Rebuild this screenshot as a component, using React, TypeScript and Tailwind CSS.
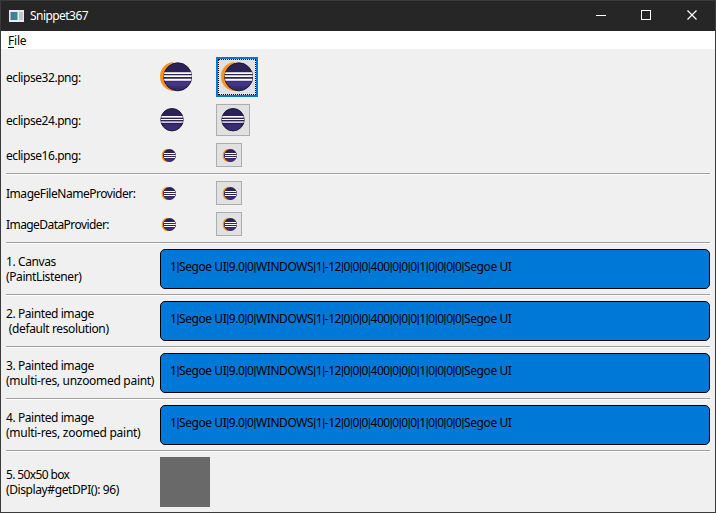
import React from "react";

function Sphere({ size }: { size: 16 | 24 | 32 }) {
  if (size === 32) {
    return (
      <svg width="32" height="32" viewBox="0 0 32 32" className="block shrink-0">
        <defs>
          <linearGradient id="s32" x1="0" y1="0" x2="0" y2="1">
            <stop offset="0" stopColor="#2c2255" />
            <stop offset="0.5" stopColor="#2c2255" />
            <stop offset="0.75" stopColor="#473788" />
            <stop offset="1" stopColor="#2c2255" />
          </linearGradient>
        </defs>
        <path d="M14 1C6 1 0 7.500 0 15.500S6 30 14 30C8 27 5 22 5 15.500S8 4 14 1z" fill="#f7941e" />
        <circle cx="17.700" cy="15.800" r="14" fill="url(#s32)" stroke="#17122e" strokeWidth="0.900" />
        <path d="M4.500 11.200h26.400l.6 1.800H4zM3.700 14.200h28v1.900h-28zM4 17.800h27.500l-.6 1.900H4.500z" fill="#fff" />
      </svg>
    );
  }
  if (size === 24) {
    return (
      <svg width="24" height="24" viewBox="0 0 24 24" className="block shrink-0">
        <circle cx="12" cy="11.700" r="11.200" fill="#2c2255" stroke="#17122e" strokeWidth="0.900" />
        <path d="M3 16.500h18c-2 4-5 5.500-9 5.500s-7-1.500-9-5.500z" fill="#3b2d75" />
        <path d="M1.500 8h21v1.200h-21zM.8 10.900h22.400v1.200H.8z" fill="#fff" />
        <path d="M1.200 9.200h21.600v.8H1.200zM1 13.200h22l-.4 1.900H1.400z" fill="#cbc6de" />
      </svg>
    );
  }
  return (
    <svg width="16" height="16" viewBox="0 0 16 16" className="block shrink-0">
      <path d="M7.500 1.700C4 2 1.700 4.500 1.700 8.500s2.300 6.300 5.800 6.700z" fill="#f7941e" />
      <circle cx="9.500" cy="8.500" r="6.500" fill="#2c2255" />
      <path d="M4.500 11.500h10c-1 2-3 3-5 3s-4-1-5-3z" fill="#3d2f7a" />
      <path d="M4 6h11v1H4zM4 8h11.700v1H4zM4 10h11v1H4z" fill="#fff" />
    </svg>
  );
}

function Label({ children, className = "" }: { children: React.ReactNode; className?: string }) {
  return <div className={`w-[154px] shrink-0 whitespace-pre leading-[15px] ${className}`}>{children}</div>;
}

function Separator() {
  return <div className="h-0.5 shrink-0 border-t border-b border-t-[#a0a0a0] border-b-white" />;
}

function IconRow({ label, size, row, button, focused = false, tracking }: {
  label: string; size: 16 | 24 | 32; row: string; button: string; focused?: boolean; tracking: string;
}) {
  return (
    <div className={`flex shrink-0 items-center ${row}`}>
      <Label className={tracking}>{label}</Label>
      <div className="flex w-14"><Sphere size={size} /></div>
      <button className={`flex items-center justify-center bg-[#e1e1e1] ${button} ${focused ? "border-2 border-[#0078d7] p-0" : "border border-[#adadad]"}`}>
        {focused ? (
          <span className="flex h-full w-full items-center justify-center border border-dotted border-black"><Sphere size={size} /></span>
        ) : <Sphere size={size} />}
      </button>
    </div>
  );
}

const fontData = "1|Segoe UI|9.0|0|WINDOWS|1|-12|0|0|0|400|0|0|0|1|0|0|0|0|Segoe UI".split("|");

function CanvasRow({ first, second, trackFirst, trackSecond }: {
  first: string; second: string; trackFirst: string; trackSecond: string;
}) {
  return (
    <div className="flex h-10 shrink-0 items-center">
      <Label>
        <div className={trackFirst}>{first}</div>
        <div className={trackSecond}>{second}</div>
      </Label>
      <div className="h-10 w-[550px] whitespace-nowrap rounded-[5px] border border-black bg-[#0078d7] pl-[9px] pt-[9px] leading-[16px] tracking-[-0.42px]">
        {fontData.map((part, i) => (
          <React.Fragment key={i}>
            {i > 0 && <span className="font-['Roboto',sans-serif]">|</span>}
            {part}
          </React.Fragment>
        ))}
      </div>
    </div>
  );
}

export default function App() {
  return (
    <div className="flex h-[513px] w-[716px] flex-col overflow-hidden border border-[#3a3a3a] bg-[#f0f0f0] font-['Noto_Sans','Open_Sans',sans-serif] text-[12px] text-black">
      <header className="flex h-[30px] shrink-0 items-center bg-[#262626] text-white">
        <svg width="16" height="14" viewBox="0 0 16 14" className="ml-2">
          <path d="M0 1h15v12H0z" fill="#e8ebef" />
          <path d="M1.500 3h7v8h-7z" fill="#3d8c83" />
          <path d="M2 3h3v8H2z" fill="#4878a0" />
          <path d="M10 3h4v8h-4z" fill="#bfc5cc" />
        </svg>
        <span className="ml-[5px] flex-1 tracking-[-0.55px]">Snippet367</span>
        <div className="flex h-full w-[138px] items-center">
          <svg width="138" height="30" viewBox="0 0 138 30" fill="none" stroke="#fff" shapeRendering="crispEdges">
            <path d="M19 14.500h10M64.500 9.500h9v9h-9z" />
            <path d="M110.500 9.500l9 9M119.500 9.500l-9 9" shapeRendering="auto" strokeWidth="1.200" />
          </svg>
        </div>
      </header>
      <nav className="flex h-[18px] shrink-0 items-center bg-white pl-[7px] pt-px">
        <span className="tracking-[-0.2px]"><span className="underline underline-offset-2">F</span>ile</span>
      </nav>
      <main className="flex flex-1 flex-col gap-[5px] px-[5px] pt-[7px]">
        <IconRow label="eclipse32.png:" size={32} row="h-[42px]" button="h-10 w-[42px]" focused tracking="tracking-[-0.44px]" />
        <IconRow label="eclipse24.png:" size={24} row="h-[34px]" button="h-8 w-[34px]" tracking="tracking-[-0.44px]" />
        <IconRow label="eclipse16.png:" size={16} row="h-[26px]" button="h-6 w-[26px]" tracking="tracking-[-0.44px]" />
        <Separator />
        <IconRow label="ImageFileNameProvider:" size={16} row="h-[26px]" button="h-6 w-[26px]" tracking="tracking-[-0.46px]" />
        <IconRow label="ImageDataProvider:" size={16} row="h-[26px]" button="h-6 w-[26px]" tracking="tracking-[-0.57px]" />
        <Separator />
        <CanvasRow first="1. Canvas" second="(PaintListener)" trackFirst="tracking-[-0.4px]" trackSecond="tracking-[-0.4px]" />
        <Separator />
        <CanvasRow first="2. Painted image" second=" (default resolution)" trackFirst="tracking-[-0.42px]" trackSecond="tracking-[-0.37px]" />
        <Separator />
        <CanvasRow first="3. Painted image" second="(multi-res, unzoomed paint)" trackFirst="tracking-[-0.42px]" trackSecond="tracking-[-0.3px]" />
        <Separator />
        <CanvasRow first="4. Painted image" second="(multi-res, zoomed paint)" trackFirst="tracking-[-0.42px]" trackSecond="tracking-[-0.28px]" />
        <Separator />
        <div className="flex h-[50px] shrink-0 items-center">
          <Label>
            <div className="tracking-[-0.63px]">5. 50x50 box</div>
            <div className="tracking-[-0.4px]">(Display#getDPI(): 96)</div>
          </Label>
          <div className="size-[50px] bg-[#696969]" />
        </div>
      </main>
    </div>
  );
}
